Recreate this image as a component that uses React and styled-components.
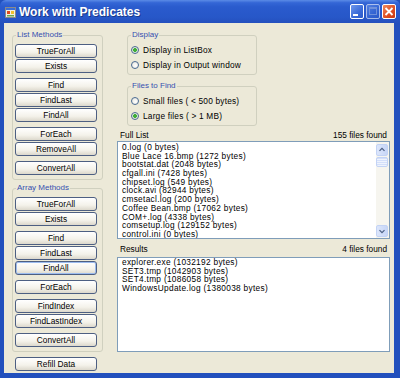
import React from "react";
import styled, { createGlobalStyle } from "styled-components";

const fullList = [
  "0.log (0 bytes)",
  "Blue Lace 16.bmp (1272 bytes)",
  "bootstat.dat (2048 bytes)",
  "cfgall.ini (7428 bytes)",
  "chipset.log (549 bytes)",
  "clock.avi (82944 bytes)",
  "cmsetacl.log (200 bytes)",
  "Coffee Bean.bmp (17062 bytes)",
  "COM+.log (4338 bytes)",
  "comsetup.log (129152 bytes)",
  "control.ini (0 bytes)",
];

const results = [
  "explorer.exe (1032192 bytes)",
  "SET3.tmp (1042903 bytes)",
  "SET4.tmp (1086058 bytes)",
  "WindowsUpdate.log (1380038 bytes)",
];

const listMethods = [
  ["TrueForAll", "Exists"],
  ["Find", "FindLast", "FindAll"],
  ["ForEach", "RemoveAll"],
  ["ConvertAll"],
];

const arrayMethods = [
  ["TrueForAll", "Exists"],
  ["Find", "FindLast", "FindAll"],
  ["ForEach"],
  ["FindIndex", "FindLastIndex"],
  ["ConvertAll"],
];

function App() {
  return (
    <>
      <GlobalStyle />
      <Window>
        <TitleBar>
          <AppIcon width="11" height="11" viewBox="0 0 11 11">
            <rect x="0.5" y="0.5" width="10" height="10" fill="#f3f0e4" stroke="#8a8a8a" />
            <rect x="1" y="1" width="9" height="2" fill="#3a6fd8" />
            <rect x="2" y="4" width="3" height="3" fill="#e04a1c" />
            <rect x="6" y="4" width="3" height="3" fill="#f2c12e" />
            <rect x="2" y="8" width="7" height="1.5" fill="#6aa84f" />
          </AppIcon>
          <Title>Work with Predicates</Title>
          <Caption>
            <CaptionButton>
              <svg width="14" height="15" viewBox="0 0 14 15">
                <rect x="3" y="10" width="5" height="2" fill="#fff" />
              </svg>
            </CaptionButton>
            <CaptionButton $disabled>
              <svg width="14" height="15" viewBox="0 0 14 15">
                <rect x="3.5" y="3.5" width="7" height="7" fill="none" stroke="#9fb6e6" />
                <rect x="3.5" y="3.5" width="7" height="1.5" fill="#9fb6e6" />
              </svg>
            </CaptionButton>
            <CaptionButton $close>
              <svg width="14" height="15" viewBox="0 0 14 15">
                <path d="M3.5 4 L10.5 11 M10.5 4 L3.5 11" stroke="#fff" strokeWidth="1.8" />
              </svg>
            </CaptionButton>
          </Caption>
        </TitleBar>
        <Frame>
          <Client>
            <LeftColumn>
              <GroupBox>
                <Legend>List Methods</Legend>
                {listMethods.map((group, i) => (
                  <ButtonStack key={i}>
                    {group.map((name) => (
                      <Button key={name}>{name}</Button>
                    ))}
                  </ButtonStack>
                ))}
              </GroupBox>
              <GroupBox $top={3}>
                <Legend>Array Methods</Legend>
                {arrayMethods.map((group, i) => (
                  <ButtonStack key={i}>
                    {group.map((name) => (
                      <Button key={name} $focused={i === 1 && name === "FindAll"}>
                        {name}
                      </Button>
                    ))}
                  </ButtonStack>
                ))}
              </GroupBox>
              <RefillButton>Refill Data</RefillButton>
            </LeftColumn>

            <RightColumn>
              <Options>
                <OptionGroup>
                  <Legend>Display</Legend>
                  <RadioRow>
                    <Radio $checked />
                    Display in ListBox
                  </RadioRow>
                  <RadioRow>
                    <Radio />
                    Display in Output window
                  </RadioRow>
                </OptionGroup>
                <OptionGroup>
                  <Legend>Files to Find</Legend>
                  <RadioRow>
                    <Radio />
                    Small files ( &lt; 500 bytes)
                  </RadioRow>
                  <RadioRow>
                    <Radio $checked />
                    Large files ( &gt; 1 MB)
                  </RadioRow>
                </OptionGroup>
              </Options>

              <ListHeader $top={4}>
                <span>Full List</span>
                <span>155 files found</span>
              </ListHeader>
              <ListBox $height={98}>
                <Items $padTop={1}>
                  {fullList.map((item) => (
                    <Item key={item}>{item}</Item>
                  ))}
                </Items>
                <ScrollBar>
                  <ArrowButton>
                    <svg width="12" height="10" viewBox="0 0 12 10">
                      <path d="M3 6 L6 3 L9 6" fill="none" stroke="#4d6185" strokeWidth="1.5" />
                    </svg>
                  </ArrowButton>
                  <Thumb />
                  <Track />
                  <ArrowButton>
                    <svg width="12" height="10" viewBox="0 0 12 10">
                      <path d="M3 4 L6 7 L9 4" fill="none" stroke="#4d6185" strokeWidth="1.5" />
                    </svg>
                  </ArrowButton>
                </ScrollBar>
              </ListBox>

              <ListHeader $top={5}>
                <span>Results</span>
                <span>4 files found</span>
              </ListHeader>
              <ListBox $height={95} $top={3}>
                <Items $padTop={0}>
                  {results.map((item) => (
                    <Item key={item}>{item}</Item>
                  ))}
                </Items>
              </ListBox>
            </RightColumn>
          </Client>
        </Frame>
      </Window>
    </>
  );
}

const GlobalStyle = createGlobalStyle`
  html, body {
    margin: 0;
    padding: 0;
    background: #ece9d8;
  }
  body {
    font-family: "Liberation Sans", Arial, sans-serif;
  }
`;

const Window = styled.div`
  width: 400px;
  height: 378px;
  display: flex;
  flex-direction: column;
  overflow: hidden;
  background: #2250bd;
`;

const TitleBar = styled.div`
  height: 23px;
  flex: none;
  display: flex;
  align-items: center;
  padding: 0 4px 0 5px;
  box-sizing: border-box;
  background: linear-gradient(
    to bottom,
    #5b8be6 0%,
    #3466d6 12%,
    #2a5bcd 30%,
    #2757c8 75%,
    #2450bd 100%
  );
  border-radius: 6px 6px 0 0;
`;

const AppIcon = styled.svg`
  flex: none;
  margin-top: 1px;
`;

const Title = styled.div`
  margin-left: 3px;
  flex: 1;
  color: #fff;
  font-weight: bold;
  font-size: 12px;
  text-shadow: 1px 1px 0 #1a3a8a;
  white-space: nowrap;
`;

const Caption = styled.div`
  display: flex;
  gap: 2px;
`;

const CaptionButton = styled.div`
  width: 14px;
  height: 15px;
  box-sizing: border-box;
  border: 1px solid #fff;
  border-radius: 2px;
  display: flex;
  align-items: center;
  justify-content: center;
  overflow: hidden;
  background: ${(p) =>
    p.$close
      ? "linear-gradient(135deg, #f08a5e 0%, #dd4d21 60%, #c83a12 100%)"
      : "linear-gradient(135deg, #6e98ec 0%, #3b6bd8 60%, #2c5ac8 100%)"};
  opacity: ${(p) => (p.$disabled ? 0.6 : 1)};
  & svg {
    flex: none;
  }
`;

const Frame = styled.div`
  flex: 1;
  display: flex;
  padding: 0 6px 5px 4px;
  min-height: 0;
`;

const Client = styled.div`
  flex: 1;
  display: flex;
  gap: 14px;
  padding: 7px 4px 0 8px;
  background: #ece9d8;
  font-size: 8.3px;
  color: #000;
`;

const LeftColumn = styled.div`
  width: 91px;
  flex: none;
  display: flex;
  flex-direction: column;
`;

const GroupBox = styled.fieldset`
  margin: ${(p) => p.$top || 0}px 0 0 0;
  padding: 4px 4px 4px 2px;
  border: 1px solid #d0d0bf;
  border-radius: 3px;
  min-width: 0;
  display: flex;
  flex-direction: column;
  gap: 5px;
`;

const Legend = styled.legend`
  padding: 0 1px;
  margin-left: 1px;
  font-size: 8px;
  line-height: 10px;
  color: #3650b0;
`;

const ButtonStack = styled.div`
  display: flex;
  flex-direction: column;
  gap: 1px;
`;

const Button = styled.button`
  width: 82px;
  height: 14px;
  padding: 0;
  margin: 0;
  box-sizing: border-box;
  border: 1px solid #4d5f82;
  border-radius: 3px;
  font-family: "Liberation Sans", Arial, sans-serif;
  font-size: 8.3px;
  line-height: 12px;
  color: #000;
  background: linear-gradient(to bottom, #ffffff 0%, #f4f2ea 60%, #dcd8cc 100%);
  box-shadow: ${(p) => (p.$focused ? "inset 0 0 0 1px #9cbcef" : "none")};
`;

const RefillButton = styled(Button)`
  margin: 5px 0 0 3px;
`;

const RightColumn = styled.div`
  flex: 1;
  display: flex;
  flex-direction: column;
  min-width: 0;
`;

const Options = styled.div`
  padding-left: 10px;
  display: flex;
  flex-direction: column;
  gap: 6px;
`;

const OptionGroup = styled.fieldset`
  width: 130px;
  box-sizing: border-box;
  margin: 0;
  padding: 2px;
  border: 1px solid #d0d0bf;
  border-radius: 3px;
  min-width: 0;
`;

const RadioRow = styled.div`
  height: 15px;
  display: flex;
  align-items: center;
  gap: 4px;
  font-size: 8.3px;
  letter-spacing: 0.2px;
  white-space: nowrap;
`;

const Radio = styled.span`
  width: 8px;
  height: 8px;
  flex: none;
  margin-left: 1px;
  box-sizing: border-box;
  border-radius: 50%;
  border: 1px solid #4a6a92;
  background: ${(p) =>
    p.$checked
      ? "radial-gradient(circle, #3fae3a 0 1.6px, #dfe8d8 2.2px, #f6f6f2 100%)"
      : "radial-gradient(circle at 60% 60%, #ffffff 0%, #e4e2d8 100%)"};
`;

const ListHeader = styled.div`
  margin-top: ${(p) => p.$top}px;
  height: 10px;
  line-height: 10px;
  padding: 0 3px;
  display: flex;
  justify-content: space-between;
  white-space: nowrap;
`;

const ListBox = styled.div`
  margin-top: ${(p) => p.$top || 1}px;
  height: ${(p) => p.$height}px;
  box-sizing: border-box;
  border: 1px solid #7f9db9;
  background: #fff;
  display: flex;
  overflow: hidden;
`;

const Items = styled.div`
  flex: 1;
  padding: ${(p) => p.$padTop}px 0 0 4px;
  min-width: 0;
  font-size: 8.3px;
  letter-spacing: 0.3px;
`;

const Item = styled.div`
  height: 8.7px;
  line-height: 8.7px;
  white-space: nowrap;
`;

const ScrollBar = styled.div`
  width: 12px;
  flex: none;
  display: flex;
  flex-direction: column;
  padding: 2px 1px 1px 0;
  background: #f6f5ef;
`;

const ArrowButton = styled.div`
  height: 10px;
  flex: none;
  display: flex;
  align-items: center;
  justify-content: center;
  border-radius: 2px;
  border: 1px solid #c3d3f5;
  background: linear-gradient(to right, #dce6fb, #c7d6f7);
`;

const Thumb = styled.div`
  height: 8px;
  flex: none;
  margin-top: 1px;
  border-radius: 2px;
  border: 1px solid #c3d3f5;
  background: repeating-linear-gradient(
    to bottom,
    #d3dffa 0 1px,
    #eef3fd 1px 2px
  );
`;

const Track = styled.div`
  flex: 1;
`;

export default App;
